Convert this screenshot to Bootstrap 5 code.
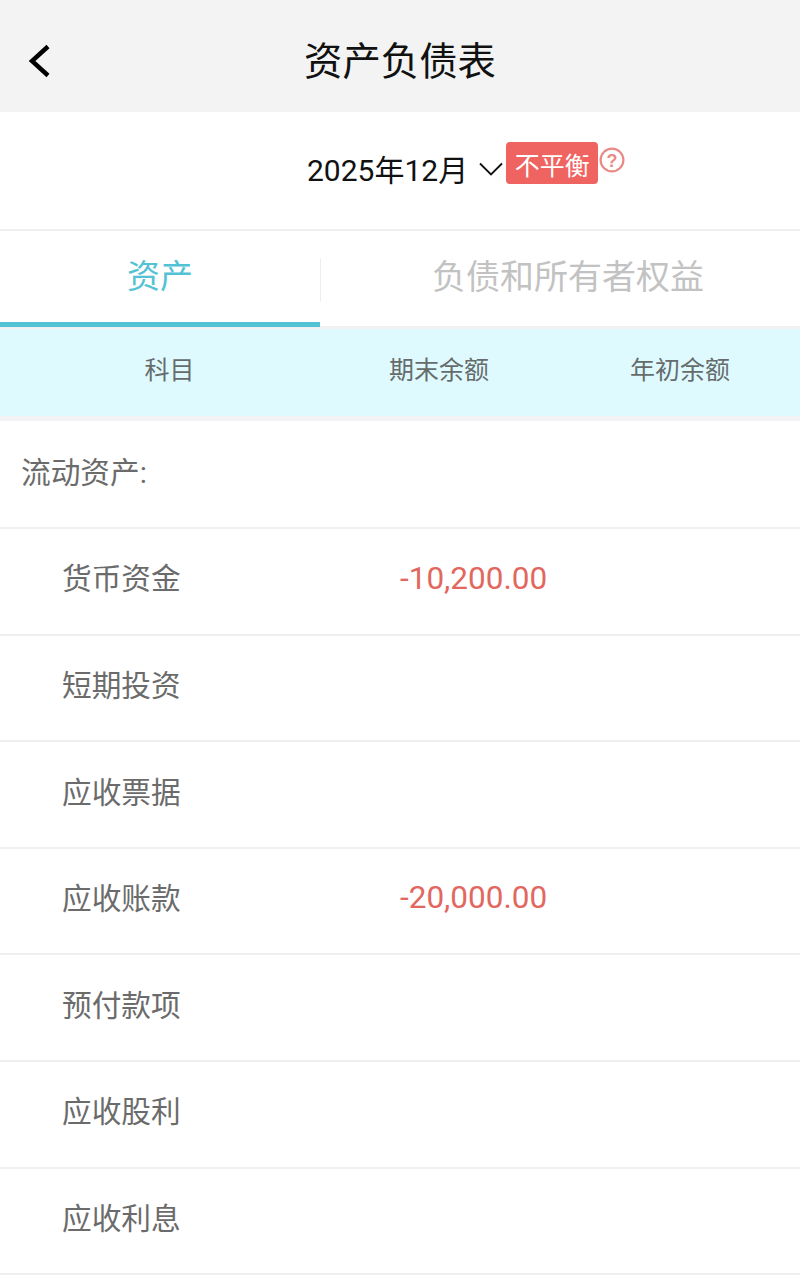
<!DOCTYPE html>
<html lang="zh-CN">
<head>
    <meta charset="UTF-8">
    <meta name="viewport" content="width=device-width, initial-scale=1.0">
    <link rel="stylesheet" href="https://cdn.jsdelivr.net/npm/bootstrap@5.3.3/dist/css/bootstrap.min.css">
    <title>资产负债表</title>
    <style>
        body {
            font-family: Roboto, "Noto Sans CJK SC", sans-serif;
            background-color: #fff;
            height: 1280px;
            overflow: hidden;
        }
        .top-bar {
            height: 112px;
            background-color: #f3f3f3;
        }
        .back-btn {
            left: 28px;
            top: 44px;
            line-height: 0;
        }
        .page-title {
            font-size: 38.4px;
            line-height: 1;
            color: #111;
            margin-top: 12px;
        }
        .date-row {
            height: 119px;
            padding-left: 307px;
            padding-top: 29px;
            border-bottom: 2px solid #efefef;
        }
        .date-text {
            font-size: 30px;
            line-height: 1;
            color: #111;
            margin-top: 15px;
        }
        .date-arrow {
            margin: 21px 3px 0 11px;
        }
        .warn-tag {
            width: 92px;
            height: 42px;
            background-color: #ef6461;
            color: #fff;
            font-size: 25px;
            line-height: 1;
            border-radius: 4px;
            margin-top: 1px;
            padding-top: 7px;
        }
        .help-icon {
            line-height: 0;
            margin-top: 6px;
            margin-left: 1px;
        }
        .tab-row {
            height: 98px;
            border-bottom: 3px solid #f1f1f1;
        }
        .tab-item {
            line-height: 1;
        }
        .tab-on {
            width: 320px;
            font-size: 33px;
            color: #52c2d4;
            border-bottom: 5px solid #52c2d4;
            margin-bottom: -1px;
        }
        .tab-off {
            font-size: 34px;
            color: #c2c2c2;
            padding-left: 16px;
            padding-bottom: 4px;
        }
        .tab-line {
            left: 320px;
            top: 27px;
            width: 1px;
            height: 44px;
            background-color: #eee;
        }
        .head-row {
            height: 87px;
            background-color: #defaff;
            color: #666c6c;
            font-size: 25px;
            line-height: 1;
            padding-bottom: 4px;
        }
        .head-a { width: 339px; text-align: center; }
        .head-b { width: 200px; text-align: center; }
        .head-c { width: 261px; text-align: center; padding-left: 21px; }
        .head-gap {
            height: 5px;
            background-color: #f3f3f5;
        }
        .sheet-row {
            height: 106.6px;
            border-bottom: 2px solid #efefef;
            font-size: 29.7px;
            line-height: 1;
            color: #6b6b6b;
            padding-bottom: 4px;
        }
        .group-row {
            height: 108px;
            padding-left: 21px;
            padding-bottom: 2px;
        }
        .item-row {
            padding-left: 62px;
        }
        .item-name {
            width: 338px;
        }
        .amount {
            color: #e2675f;
            font-size: 31.5px;
            margin-bottom: 2px;
        }
    </style>
</head>
<body>
    <div class="top-bar position-relative d-flex justify-content-center align-items-center">
        <a href="#" class="back-btn position-absolute">
            <svg width="24" height="34" viewBox="0 0 24 34"><path d="M20 2.5 4 17l16 14.5" fill="none" stroke="#000" stroke-width="4.4"/></svg>
        </a>
        <div class="page-title">资产负债表</div>
    </div>

    <div class="date-row d-flex align-items-start">
        <span class="date-text">2025年12月</span>
        <svg class="date-arrow" width="24" height="14" viewBox="0 0 24 14"><path d="M1 1.5 12 12.5 23 1.5" fill="none" stroke="#111" stroke-width="1.8"/></svg>
        <span class="warn-tag d-flex justify-content-center align-items-center">不平衡</span>
        <span class="help-icon">
            <svg width="26" height="26" viewBox="0 0 26 26"><circle cx="13" cy="13" r="11.4" fill="none" stroke="#e98a86" stroke-width="2.2"/><text x="13" y="19.5" text-anchor="middle" font-size="18" font-weight="700" fill="#e98a86" font-family="Liberation Sans, sans-serif">?</text></svg>
        </span>
    </div>

    <div class="tab-row position-relative d-flex">
        <div class="tab-item tab-on d-flex justify-content-center align-items-center">资产</div>
        <div class="tab-line position-absolute"></div>
        <div class="tab-item tab-off flex-grow-1 d-flex justify-content-center align-items-center">负债和所有者权益</div>
    </div>

    <div class="head-row d-flex align-items-center">
        <div class="head-a">科目</div>
        <div class="head-b">期末余额</div>
        <div class="head-c">年初余额</div>
    </div>
    <div class="head-gap"></div>

    <div class="sheet-row group-row d-flex align-items-center">流动资产:</div>
    <div class="sheet-row item-row d-flex align-items-center"><span class="item-name">货币资金</span><span class="amount">-10,200.00</span></div>
    <div class="sheet-row item-row d-flex align-items-center"><span class="item-name">短期投资</span></div>
    <div class="sheet-row item-row d-flex align-items-center"><span class="item-name">应收票据</span></div>
    <div class="sheet-row item-row d-flex align-items-center"><span class="item-name">应收账款</span><span class="amount">-20,000.00</span></div>
    <div class="sheet-row item-row d-flex align-items-center"><span class="item-name">预付款项</span></div>
    <div class="sheet-row item-row d-flex align-items-center"><span class="item-name">应收股利</span></div>
    <div class="sheet-row item-row d-flex align-items-center"><span class="item-name">应收利息</span></div>

    <script src="https://cdn.jsdelivr.net/npm/bootstrap@5.3.3/dist/js/bootstrap.bundle.min.js"></script>
</body>
</html>
